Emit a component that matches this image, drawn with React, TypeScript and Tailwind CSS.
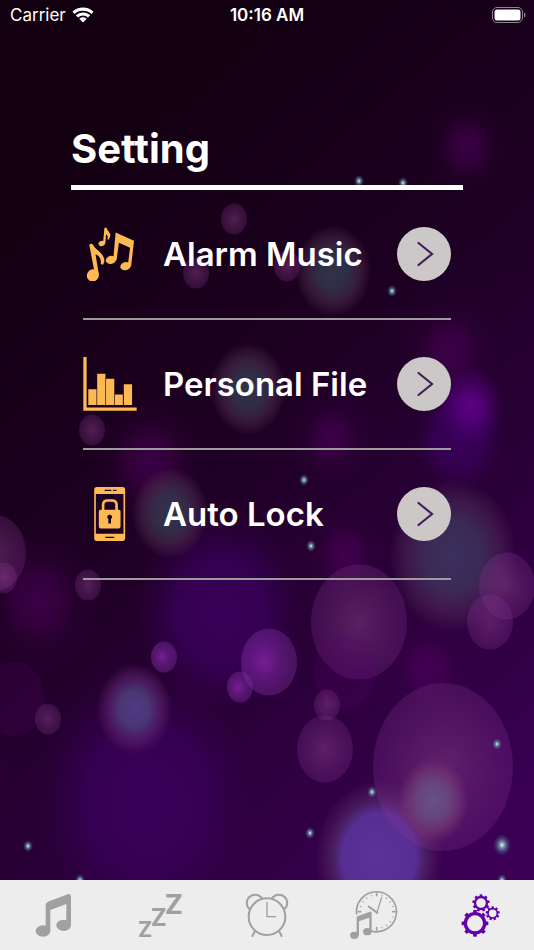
import type { ReactNode } from "react";

type Oval = [cx: number, cy: number, rx: number, fill: string];

// soft, blurred lights at the back
const GLOWS: Oval[] = [
  [467, 147, 42, "violet"],
  [450, 352, 50, "violet"],
  [332, 438, 42, "violet"],
  [150, 462, 58, "violet"],
  [38, 600, 62, "violet"],
  [345, 555, 42, "violet"],
  [427, 668, 45, "violet"],
  [459, 438, 46, "indigo"],
  [471, 405, 34, "magenta"],
  [220, 612, 84, "indigo"],
  [145, 797, 108, "indigo"],
  [-25, 770, 36, "violet"],
  [333, 271, 38, "smoke"],
  [248, 389, 38, "smoke"],
  [170, 513, 38, "smoke"],
  [453, 556, 64, "mist"],
  [133, 709, 38, "haze"],
  [379, 857, 64, "lamp"],
];

// crisp ovals
const BUBBLES: Oval[] = [
  [234, 219, 13, "bubble"],
  [196, 273, 13, "bubble"],
  [287, 266, 13, "bubble"],
  [92, 430, 13, "bubble"],
  [88, 585, 13, "bubble"],
  [-6, 553, 32, "bubble"],
  [4, 578, 13, "bubble"],
  [14, 699, 31, "shade"],
  [48, 719, 13, "bubble"],
  [164, 657, 13, "bubbleHot"],
  [269, 662, 28, "bubbleHot"],
  [240, 687, 13, "bubbleHot"],
  [359, 622, 48, "bubble"],
  [345, 672, 31, "shade"],
  [327, 705, 13, "bubble"],
  [325, 749, 28, "bubble"],
  [507, 586, 28, "bubble"],
  [490, 622, 23, "bubble"],
  [443, 767, 70, "bubble"],
  [433, 801, 36, "pearl"],
];

const STARS = [
  [359, 181, 5],
  [403, 183, 5],
  [392, 291, 5],
  [304, 480, 5],
  [311, 546, 5],
  [497, 744, 5],
  [372, 792, 5],
  [310, 833, 5],
  [28, 846, 5],
  [502, 845, 9],
  [80, 880, 5],
  [502, 880, 5],
];

function Stop({ at, color, opacity = 1 }: { at: number; color: string; opacity?: number }) {
  return <stop offset={at} stopColor={color} stopOpacity={opacity} />;
}

function Backdrop() {
  return (
    <svg
      className="absolute inset-0 h-full w-full"
      viewBox="0 0 534 950"
      preserveAspectRatio="xMidYMid slice"
      aria-hidden="true"
    >
      <defs>
        <linearGradient id="base" gradientUnits="userSpaceOnUse" x1="40" y1="140" x2="600" y2="800">
          <Stop at={0} color="#120010" />
          <Stop at={0.35} color="#1c0020" />
          <Stop at={0.65} color="#2a0038" />
          <Stop at={1} color="#3d0058" />
        </linearGradient>
        <radialGradient id="violet">
          <Stop at={0} color="#540064" opacity={0.55} />
          <Stop at={0.35} color="#50005c" opacity={0.42} />
          <Stop at={0.65} color="#40004a" opacity={0.16} />
          <Stop at={1} color="#40004a" opacity={0} />
        </radialGradient>
        <radialGradient id="magenta">
          <Stop at={0} color="#6c0098" opacity={0.8} />
          <Stop at={0.4} color="#60008c" opacity={0.6} />
          <Stop at={1} color="#50007a" opacity={0} />
        </radialGradient>
        <radialGradient id="indigo">
          <Stop at={0} color="#3e0062" opacity={0.85} />
          <Stop at={0.55} color="#3c0060" opacity={0.65} />
          <Stop at={0.85} color="#380058" opacity={0.2} />
          <Stop at={1} color="#380058" opacity={0} />
        </radialGradient>
        <radialGradient id="smoke">
          <Stop at={0} color="#384858" opacity={0.7} />
          <Stop at={0.4} color="#384056" opacity={0.7} />
          <Stop at={0.65} color="#4c3452" opacity={0.55} />
          <Stop at={0.85} color="#543054" opacity={0.28} />
          <Stop at={1} color="#603060" opacity={0} />
        </radialGradient>
        <radialGradient id="mist">
          <Stop at={0} color="#40406a" opacity={0.75} />
          <Stop at={0.45} color="#403a60" opacity={0.72} />
          <Stop at={0.7} color="#50305c" opacity={0.52} />
          <Stop at={1} color="#603060" opacity={0} />
        </radialGradient>
        <radialGradient id="haze" cx="0.52">
          <Stop at={0} color="#543c88" opacity={0.95} />
          <Stop at={0.4} color="#4c3c78" opacity={0.9} />
          <Stop at={0.7} color="#58206c" opacity={0.65} />
          <Stop at={1} color="#602060" opacity={0} />
        </radialGradient>
        <radialGradient id="lamp">
          <Stop at={0} color="#5c3498" />
          <Stop at={0.58} color="#583096" opacity={0.95} />
          <Stop at={0.75} color="#502464" opacity={0.7} />
          <Stop at={1} color="#502060" opacity={0} />
        </radialGradient>
        <radialGradient id="pearl">
          <Stop at={0} color="#685088" />
          <Stop at={0.45} color="#684880" opacity={0.9} />
          <Stop at={0.72} color="#743a74" opacity={0.6} />
          <Stop at={1} color="#702c70" opacity={0} />
        </radialGradient>
        <radialGradient id="bubble">
          <Stop at={0} color="#a050a0" opacity={0.4} />
          <Stop at={0.6} color="#98459c" opacity={0.29} />
          <Stop at={1} color="#9038a0" opacity={0.23} />
        </radialGradient>
        <radialGradient id="bubbleHot" cx="0.42">
          <Stop at={0} color="#9a2cba" opacity={0.68} />
          <Stop at={0.5} color="#8a2cb0" opacity={0.5} />
          <Stop at={1} color="#8030a0" opacity={0.38} />
        </radialGradient>
        <radialGradient id="shade">
          <Stop at={0} color="#5c0070" opacity={0.2} />
          <Stop at={1} color="#5c0070" opacity={0.2} />
        </radialGradient>
        <radialGradient id="star">
          <Stop at={0} color="#e4ffff" />
          <Stop at={0.25} color="#8cb4c0" opacity={0.85} />
          <Stop at={0.6} color="#50708c" opacity={0.55} />
          <Stop at={1} color="#405070" opacity={0} />
        </radialGradient>
      </defs>
      <rect width="534" height="950" fill="url(#base)" />
      {[...GLOWS, ...BUBBLES].map(([cx, cy, rx, fill]) => (
        <ellipse key={`${cx}-${cy}`} cx={cx} cy={cy} rx={rx} ry={rx * 1.2} fill={`url(#${fill})`} />
      ))}
      {STARS.map(([cx, cy, r]) => (
        <ellipse key={`${cx}-${cy}`} cx={cx} cy={cy} rx={r} ry={r * 1.2} fill="url(#star)" />
      ))}
    </svg>
  );
}

function StatusBar() {
  return (
    <header className="grid h-[30px] grid-cols-3 items-center px-2 text-[17px] leading-none">
      <div className="flex items-center gap-1.5 pl-0.5">
        <span>Carrier</span>
        <svg className="h-4 w-[22px]" viewBox="0 0 22 16" fill="#fff" aria-label="Wi-Fi">
          <path d="M11 .5c4.100 0 7.800 1.600 10.600 4.200L19.500 7A12.400 12.400 0 0 0 11 3.700 12.400 12.400 0 0 0 2.500 7L.4 4.700A15.500 15.500 0 0 1 11 .5z" />
          <path d="M11 5.400c2.800 0 5.300 1.100 7.200 2.900L16 10.600a7.300 7.300 0 0 0-10 0L3.800 8.300A10.400 10.400 0 0 1 11 5.400z" />
          <path d="M11 10.200c1.500 0 2.800.6 3.800 1.500L11 15.600l-3.800-3.900c1-.9 2.300-1.500 3.800-1.500z" />
        </svg>
      </div>
      <span className="text-center font-semibold">10:16 AM</span>
      <svg className="h-4 w-[34px] justify-self-end" viewBox="0 0 34 16" aria-label="Battery full">
        <rect x="0.500" y="0.500" width="30" height="15" rx="4.500" fill="none" stroke="#8d858e" />
        <rect x="2.500" y="2.500" width="26" height="11" rx="2.500" fill="#fff" />
        <path d="M32 5.500c2 .8 2 4.200 0 5z" fill="#8d858e" />
      </svg>
    </header>
  );
}

function RowIcon({ children }: { children: ReactNode }) {
  return (
    <svg className="size-[54px] shrink-0" viewBox="0 0 162 164" fill="#fdb954" stroke="none" aria-hidden="true">
      {children}
    </svg>
  );
}

function NotesIcon() {
  return (
    <RowIcon>
      <ellipse cx="84" cy="100" rx="16" ry="12" transform="rotate(-15 84 100)" />
      <ellipse cx="128" cy="119" rx="16" ry="12" transform="rotate(-15 128 119)" />
      <path d="M98 17l56 25-9 78-10-3 7-54-34-15-7 53-10-4z" />
      <ellipse cx="29" cy="147" rx="18" ry="19" transform="rotate(30 29 147)" />
      <path d="M18 54c4-5 9-4 12 1 5 14 35 24 34 50l-4 10-7-3c2-14-4-24-16-29l10 60-11 4z" />
      <ellipse cx="56" cy="50" rx="10" ry="8" transform="rotate(-20 56 50)" />
      <path d="M64 2h7c1 10 13 14 11 25l-5 12-4-2c3-9 0-12-4-14l-2 27-7-2z" />
    </RowIcon>
  );
}

function ChartIcon() {
  return (
    <RowIcon>
      <path d="M0 0h10v153h152v10H0z" />
      <path d="M15 98h25v48H15zM42 51h25v95H42zM69 66h25v80H69zM96 114h24v32H96zM123 83h25v63h-25z" />
    </RowIcon>
  );
}

function PhoneLockIcon() {
  return (
    <RowIcon>
      <path
        fillRule="evenodd"
        d="M41 0h78q8 0 8 8v148q0 8-8 8H41q-8 0-8-8V8q0-8 8-8zM38 21v121h84V21zM65 8v4h20V8zM90 8v4h11V8zM67 151v4h27v-4z"
      />
      <path d="M60 74V55q0-14 14-14h13q14 0 14 14v19" fill="none" stroke="#fdb954" strokeWidth="8" />
      <path
        fillRule="evenodd"
        d="M52 69h56q5 0 5 5v46q0 6-6 6H53q-6 0-6-6V74q0-5 5-5zM80 84a7 7 0 0 0-4 13v14h8V97a7 7 0 0 0-4-13z"
      />
    </RowIcon>
  );
}

function ArrowButton({ label }: { label: string }) {
  return (
    <button
      type="button"
      aria-label={label}
      className="ml-auto size-[54px] shrink-0 rounded-full bg-[#cdc8c8] text-[#40205a]"
    >
      <svg viewBox="0 0 54 54" fill="none" stroke="currentColor" strokeWidth="2.200" strokeLinecap="round">
        <path d="M21.500 16L35 27 21.500 38" />
      </svg>
    </button>
  );
}

const SETTINGS = [
  { label: "Alarm Music", icon: <NotesIcon /> },
  { label: "Personal File", icon: <ChartIcon /> },
  { label: "Auto Lock", icon: <PhoneLockIcon /> },
];

function TabIcon({ children }: { children: ReactNode }) {
  return (
    <svg className="h-[50px] w-12 overflow-visible" viewBox="0 0 144 150" fill="currentColor" aria-hidden="true">
      {children}
    </svg>
  );
}

function MusicTabIcon() {
  return (
    <TabIcon>
      <path d="M50 46q0-8 7-11l59-22q10-3 10 7v86h-14V42L64 60v63H50z" />
      <ellipse cx="42" cy="123" rx="22" ry="17" />
      <ellipse cx="104" cy="106" rx="22" ry="17" />
    </TabIcon>
  );
}

function SleepTabIcon() {
  return (
    <TabIcon>
      <g className="font-['Inter'] font-bold">
        <text x="6" y="140" fontSize="64">Z</text>
        <text x="44" y="107" fontSize="72">Z</text>
        <text x="86" y="73" fontSize="82">Z</text>
      </g>
    </TabIcon>
  );
}

function AlarmTabIcon() {
  return (
    <TabIcon>
      <g fill="none" stroke="currentColor" strokeWidth="6">
        <circle cx="72" cy="80" r="55" />
        <path d="M20 58A25 25 0 1 1 57 25M124 58A25 25 0 1 0 87 25" />
        <path d="M37 121l-10 19M107 121l10 19" />
        <path d="M72 36v44h27" strokeWidth="4" />
      </g>
    </TabIcon>
  );
}

function ClockMusicTabIcon() {
  return (
    <TabIcon>
      <g fill="none" stroke="currentColor">
        <path d="M20 74A60 60 0 1 1 60 122" strokeWidth="5" />
        {Array.from({ length: 60 }, (_, minute) => minute)
          .filter((minute) => minute % 3 === 0 && (minute < 33 || minute > 42))
          .map((minute) => (
            <path
              key={minute}
              d={minute % 15 === 0 ? "M80 8v11" : "M80 12v5"}
              strokeWidth={minute % 15 === 0 ? 5 : 3}
              transform={`rotate(${minute * 6} 80 65)`}
            />
          ))}
        <path d="M84 70L54 48" strokeWidth="6" />
        <path d="M80 70l15-48" strokeWidth="4" />
      </g>
      <path d="M20 83q0-4 4-5l36-13q5-1 5 4v56h-7V83L27 94v42h-7z" />
      <ellipse cx="13" cy="136" rx="13" ry="11" />
      <ellipse cx="52" cy="125" rx="13" ry="11" />
    </TabIcon>
  );
}

type GearProps = { cx: number; cy: number; r: number; ring: number; teeth: number; size: number };

function Gear({ cx, cy, r, ring, teeth, size }: GearProps) {
  return (
    <g stroke="currentColor" fill="none">
      <circle cx={cx} cy={cy} r={r} strokeWidth={ring} />
      {Array.from({ length: teeth }, (_, i) => (
        <path
          key={i}
          d={`M${cx} ${cy - r}v${-size}`}
          strokeWidth={size}
          transform={`rotate(${(i * 360) / teeth} ${cx} ${cy})`}
        />
      ))}
    </g>
  );
}

function GearsTabIcon() {
  return (
    <TabIcon>
      <Gear cx={54} cy={100} r={29} ring={10} teeth={8} size={11} />
      <Gear cx={72} cy={39} r={18} ring={7} teeth={9} size={8} />
      <Gear cx={107} cy={70} r={14} ring={5} teeth={9} size={7} />
    </TabIcon>
  );
}

const TABS = [
  { name: "Music", icon: <MusicTabIcon /> },
  { name: "Sleep", icon: <SleepTabIcon /> },
  { name: "Alarm", icon: <AlarmTabIcon /> },
  { name: "Music timer", icon: <ClockMusicTabIcon /> },
  { name: "Settings", icon: <GearsTabIcon />, active: true },
];

export default function App() {
  return (
    <div className="relative flex min-h-screen flex-col overflow-hidden bg-[#1c0020] font-['Inter',sans-serif] text-white">
      <Backdrop />
      <div className="relative flex flex-1 flex-col">
        <StatusBar />

        <main className="flex-1 px-[71px] pt-[95px]">
          <h1 className="border-b-[5px] border-white pb-3 text-[40px] leading-[48px] font-bold">
            Setting
          </h1>
          <ul className="px-3">
            {SETTINGS.map(({ label, icon }) => (
              <li key={label} className="flex h-[130px] items-center border-b-2 border-[#9c9c9c]">
                {icon}
                <span className="ml-[26px] text-[33px] leading-10 font-semibold whitespace-nowrap">
                  {label}
                </span>
                <ArrowButton label={`Open ${label}`} />
              </li>
            ))}
          </ul>
        </main>

        <nav className="grid h-[70px] grid-cols-5 bg-[#ededed]">
          {TABS.map(({ name, icon, active }) => (
            <a
              key={name}
              href="#"
              aria-label={name}
              aria-current={active ? "page" : undefined}
              className={`flex items-center justify-center ${active ? "text-[#6400aa]" : "text-[#a0a0a0]"}`}
            >
              {icon}
            </a>
          ))}
        </nav>
      </div>
    </div>
  );
}
